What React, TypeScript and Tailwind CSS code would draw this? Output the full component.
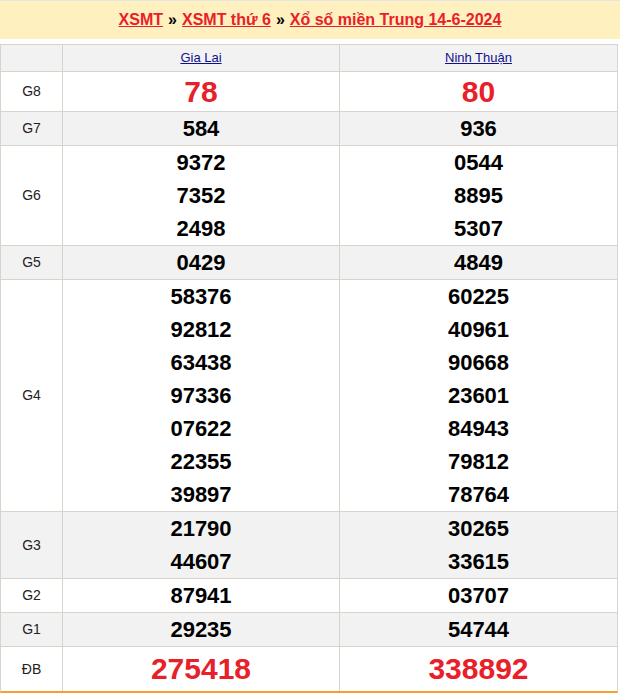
import React from 'react';

type Row = { label: string; a: string[]; b: string[]; kind?: 'g8' | 'db' };

const rows: Row[] = [
  { label: 'G8', a: ['78'], b: ['80'], kind: 'g8' },
  { label: 'G7', a: ['584'], b: ['936'] },
  { label: 'G6', a: ['9372', '7352', '2498'], b: ['0544', '8895', '5307'] },
  { label: 'G5', a: ['0429'], b: ['4849'] },
  {
    label: 'G4',
    a: ['58376', '92812', '63438', '97336', '07622', '22355', '39897'],
    b: ['60225', '40961', '90668', '23601', '84943', '79812', '78764'],
  },
  { label: 'G3', a: ['21790', '44607'], b: ['30265', '33615'] },
  { label: 'G2', a: ['87941'], b: ['03707'] },
  { label: 'G1', a: ['29235'], b: ['54744'] },
  { label: 'ĐB', a: ['275418'], b: ['338892'], kind: 'db' },
];

function Numbers({ items, kind }: { items: string[]; kind?: Row['kind'] }) {
  if (kind === 'g8') {
    return <div className="h-[39px] leading-[39px] text-[30px] font-bold text-[#e8202a]">{items[0]}</div>;
  }
  if (kind === 'db') {
    return <div className="h-[44px] leading-[44px] text-[30px] font-bold text-[#e8202a]">{items[0]}</div>;
  }
  return (
    <div className="flex flex-col">
      {items.map((n, i) => (
        <div key={i} className="h-[33px] leading-[33px] text-[22px] font-bold text-black">
          {n}
        </div>
      ))}
    </div>
  );
}

export default function App() {
  return (
    <div className="w-[620px] bg-white font-['Liberation_Sans',Arial,sans-serif]">
      <div className="h-px bg-[#e6e6e6]" />
      {/* Tieu de */}
      <div className="h-[38px] bg-[#fff0c0] flex items-center justify-center text-[16px] font-bold">
        <a href="#" className="text-[#e8202a] underline">XSMT</a>
        <span className="mx-[5px] text-black">»</span>
        <a href="#" className="text-[#e8202a] underline">XSMT thứ 6</a>
        <span className="mx-[5px] text-black">»</span>
        <a href="#" className="text-[#e8202a] underline">Xổ số miền Trung 14-6-2024</a>
      </div>

      {/* Bang ket qua */}
      <div className="mt-[5px] w-[618px] border-l border-r border-t border-[#d9d3cc] border-b-2 border-b-[#f5a033]">
        <div className="flex h-[27px] bg-[#f2f2f2] border-b border-[#d9d3cc]">
          <div className="w-[62px] border-r border-[#d9d3cc]" />
          <div className="w-[277px] border-r border-[#d9d3cc] flex items-center justify-center text-[13px]">
            <a href="#" className="text-[#10108f] underline">Gia Lai</a>
          </div>
          <div className="flex-1 flex items-center justify-center text-[13px]">
            <a href="#" className="text-[#10108f] underline">Ninh Thuận</a>
          </div>
        </div>

        {rows.map((r, i) => (
          <div
            key={r.label}
            className={`flex text-center ${i % 2 === 1 ? 'bg-[#f2f2f2]' : 'bg-white'} ${
              i < rows.length - 1 ? 'border-b border-[#d9d3cc]' : ''
            }`}
          >
            <div className="w-[62px] border-r border-[#d9d3cc] flex items-center justify-center text-[14px] text-[#222]">
              {r.label}
            </div>
            <div className="w-[277px] border-r border-[#d9d3cc]">
              <Numbers items={r.a} kind={r.kind} />
            </div>
            <div className="flex-1">
              <Numbers items={r.b} kind={r.kind} />
            </div>
          </div>
        ))}
      </div>
    </div>
  );
}
